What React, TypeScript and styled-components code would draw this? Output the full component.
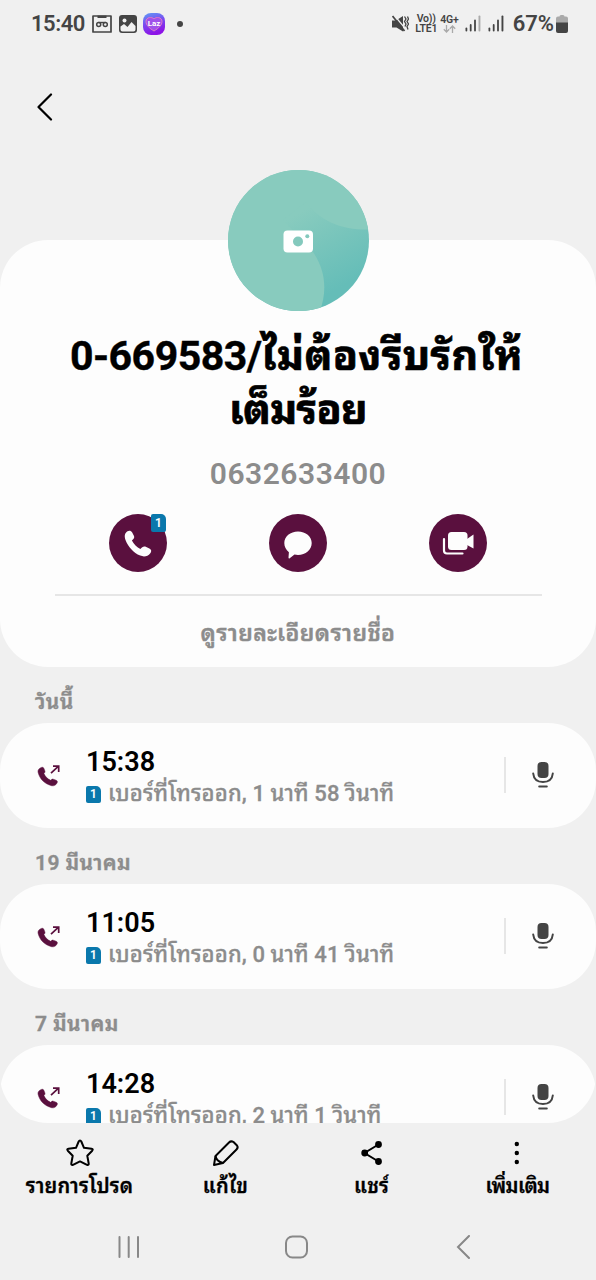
import styled, { createGlobalStyle } from 'styled-components';

const GlobalStyle = createGlobalStyle`
  * {
    box-sizing: border-box;
  }

  body {
    margin: 0;
    background: #f0f0f0;
    font-family: Roboto, 'Noto Sans Thai Looped', Loma, 'Noto Sans Thai', 'Noto Sans', sans-serif;
  }
`;

const calls = [
  { day: 'วันนี้', time: '15:38', duration: ', 1 นาที 58 วินาที' },
  { day: '19 มีนาคม', time: '11:05', duration: ', 0 นาที 41 วินาที' },
  { day: '7 มีนาคม', time: '14:28', duration: ', 2 นาที 1 วินาที' },
];

function SimBadge({ className }: { className?: string }) {
  return <Sim className={className}>1</Sim>;
}

function StatusIcons() {
  return (
    <StatusGroup>
      <svg width="20" height="18" viewBox="0 0 20 18" fill="none" stroke="#444" strokeWidth="1.7">
        <path d="M1 1h18v16H1z" strokeLinejoin="round" />
        <path d="M5.500 1.800h9" strokeWidth="2.400" />
        <circle cx="6.700" cy="9.500" r="2" strokeWidth="1.500" />
        <circle cx="13.300" cy="9.500" r="2" strokeWidth="1.500" />
        <path d="M6.500 7.500h7" strokeWidth="1.400" />
      </svg>
      <svg width="18" height="18" viewBox="0 0 18 18">
        <rect width="18" height="18" rx="3" fill="#444" />
        <circle cx="5.500" cy="5.500" r="2" fill="#f0f0f0" />
        <path d="M1.500 11.500l3.500-2.500 3.500 3 4-5 4 4v3.500q0 2-2 2h-11q-2 0-2-2z" fill="#f0f0f0" />
      </svg>
      <AppIcon viewBox="0 0 22 22">
        <defs>
          <linearGradient id="app" x1="0" y1="0" x2="0.3" y2="1">
            <stop offset="0" stopColor="#5f9df6" />
            <stop offset="0.5" stopColor="#7a4cf0" />
            <stop offset="1" stopColor="#8d12e6" />
          </linearGradient>
        </defs>
        <rect width="22" height="22" rx="8" fill="url(#app)" />
        <path d="M11 18C6 15 3 12 3 8.500C3 4 9 3.500 11 6c2-2.500 8-2 8 2.500C19 12 16 15 11 18z" fill="#a050ea" stroke="#e07ac8" strokeWidth="1" />
        <text x="11" y="13.200" fontSize="8" fontWeight="700" textAnchor="middle" fill="#fff">Laz</text>
      </AppIcon>
      <Dot />
    </StatusGroup>
  );
}

function Signal({ weak }: { weak?: boolean }) {
  return (
    <svg width="17" height="17" viewBox="0 0 17 17" fill="#444">
      <rect x="0.500" y="12.500" width="1.800" height="4" rx="0.900" />
      <rect x="4.800" y="9" width="1.800" height="7.500" rx="0.900" />
      <rect x="9.100" y="4.500" width="1.800" height="12" rx="0.900" />
      <rect x="13.500" y="0.500" width="1.900" height="16" rx="0.900" fill={weak ? '#aaa' : '#444'} />
    </svg>
  );
}

function OutgoingIcon() {
  return (
    <OutgoingSvg viewBox="0 0 24 24">
      <path
        d="M4.500 4.400C5.700 4 6.500 4.500 7 5.700L7.900 8C8.300 9.100 7.500 9.800 6.900 10.600C8.500 13.900 10.400 15.900 13.700 17.300C14.500 16.700 15.100 15.800 16.200 16.200L19 17.200C20.400 17.700 20.700 18.700 20 20C18.900 22.100 17 23.200 14.600 22.700C7.400 20.700 2.700 16.100 1 9C0.700 6.900 2.300 5 4.500 4.400z"
        fill="#5a103e"
        stroke="#5a103e"
        strokeWidth="0.500"
      />
      <path d="M14 10.200L21 3.600M16 3.200h5.700v5.700" fill="none" stroke="#5a103e" strokeWidth="1.700" />
    </OutgoingSvg>
  );
}

function MicIcon() {
  return (
    <svg width="22" height="28" viewBox="0 0 22 28" fill="none" stroke="#444" strokeWidth="2" strokeLinecap="round">
      <rect x="5.500" y="1" width="11" height="16" rx="4" fill="#444" stroke="none" />
      <path d="M1.200 12.500C1.800 18.500 5.500 21 11 21s9.200-2.500 9.800-8.500" />
      <path d="M7.200 25.600h7.600" />
    </svg>
  );
}

export default function App() {
  return (
    <Screen>
      <GlobalStyle />
      <StatusBar>
        <StatusGroup>
          <Clock>15:40</Clock>
          <StatusIcons />
        </StatusGroup>
        <StatusRight>
          <svg width="17" height="18" viewBox="0 0 17 18" fill="#444">
            <path d="M0 5.500h4L11 1v15.500L4.500 12.500H0z" />
            <path d="M2 0L14.500 15" stroke="#f0f0f0" strokeWidth="1.300" />
            <path d="M0.500 1L12.500 16" stroke="#444" strokeWidth="1.800" />
            <path d="M12.500 1.500l1.500 2.500-1.500 2.500 1.500 2.500-1 2.500M15.500 1.500l1 2.500-1.500 2.500 1.500 2.500-1.500 2.500 1 3" fill="none" stroke="#444" strokeWidth="1.300" />
          </svg>
          <Network>
            <span>Vo))</span>
            <span>LTE1</span>
          </Network>
          <Network>
            <span>4G+</span>
            <svg width="13" height="8" viewBox="0 0 13 8" fill="none" stroke="#aaa" strokeWidth="1.300">
              <path d="M3.500 0v7M0.800 4.300l2.700 2.700 2.700-2.700M9.500 8V1M6.800 3.700L9.500 1l2.700 2.700" />
            </svg>
          </Network>
          <Signal weak />
          <Signal />
          <Battery>67%</Battery>
          <svg width="12" height="18" viewBox="0 0 12 18">
            <path d="M3.500 1.500Q3.500 0 5 0h2q1.500 0 1.500 1.500H10q2 0 2 2V8H0V3.500q0-2 2-2z" fill="#aaa" />
            <path d="M0 7.500h12V16q0 2-2 2H2q-2 0-2-2z" fill="#444" />
          </svg>
        </StatusRight>
      </StatusBar>

      <Header>
        <svg width="18" height="28" viewBox="0 0 18 28" fill="none" stroke="#000" strokeWidth="2.200" strokeLinecap="round" strokeLinejoin="round">
          <path d="M15 1.500L2.500 14 15 26.500" />
        </svg>
      </Header>

      <Profile>
        <Avatar viewBox="0 0 141 141">
          <defs>
            <clipPath id="face">
              <circle cx="70.500" cy="70.500" r="70.500" />
            </clipPath>
            <linearGradient id="wave" gradientUnits="userSpaceOnUse" x1="80" y1="38" x2="122" y2="112">
              <stop offset="0" stopColor="#88cbbe" />
              <stop offset="1" stopColor="#65bdb8" />
            </linearGradient>
          </defs>
          <g clipPath="url(#face)">
            <rect width="141" height="141" fill="url(#wave)" />
            <path d="M78 32C93 52 114 60 141 59.500V0H0V141H92C99 121 98 101 85 82L55 50z" fill="#88cbbe" />
          </g>
          <rect x="55.500" y="60.500" width="29.500" height="22" rx="4" fill="#fff" />
          <circle cx="70" cy="71.500" r="5" fill="#84c9bd" />
          <circle cx="79.300" cy="66.300" r="2" fill="#84c9bd" />
        </Avatar>
        <Name>
          0-669583/<FirstLine>ไม่ต้องรีบรักให้</FirstLine>
          <br />
          <SecondLine>เต็มร้อย</SecondLine>
        </Name>
        <Phone>0632633400</Phone>
        <Actions>
          <Action>
            <svg width="58" height="58" viewBox="0 0 58 58" fill="#fdfdfd">
              <path d="M18.500 17.300C20.200 16.200 22.200 16.700 23.200 18.500L25 21.900C25.900 23.700 24.300 25 22.900 26.500C24.600 30 28 33.300 31.400 34.900C33 33.500 34.400 31.900 36.200 32.600L40.400 34.400C42.600 35.300 42.700 37.400 41.300 39.200C38.800 42.400 35 43.200 31.200 41.600C24.400 38.500 19.200 33 16.600 26.200C15.100 22.200 15.600 19.200 18.500 17.300z" />
            </svg>
            <ActionBadge />
          </Action>
          <Action>
            <svg width="58" height="58" viewBox="0 0 58 58" fill="#fdfdfd">
              <path d="M29 17.500c7.700 0 13.700 5 13.700 11.600S36.700 41 29 41c-1.200 0-2.400-.1-3.500-.4L20.700 44.300c-.6.400-1.300.1-1.200-.7l.4-5.400c-2.900-2.200-4.600-5.400-4.600-9.100 0-6.600 6-11.600 13.700-11.600z" />
            </svg>
          </Action>
          <Action>
            <svg width="58" height="58" viewBox="0 0 58 58" fill="#fdfdfd">
              <rect x="19" y="18" width="19.500" height="18" rx="3.500" />
              <path d="M38 25l6.500-4.500v14L38 31z" strokeLinejoin="round" />
              <path d="M15 25v11.500q0 3 3 3h15.500" fill="none" stroke="#fdfdfd" strokeWidth="2.200" strokeLinecap="round" />
            </svg>
          </Action>
        </Actions>
        <Details>ดูรายละเอียดรายชื่อ</Details>
      </Profile>

      <CallList>
        {calls.map((call) => (
          <div key={call.day}>
            <Day>{call.day}</Day>
            <CallCard>
              <OutgoingIcon />
              <CallText>
                <Time>{call.time}</Time>
                <Duration>
                  <SimBadge />
                  <span>เบอร์ที่โทรออก{call.duration}</span>
                </Duration>
              </CallText>
              <Recording>
                <MicIcon />
              </Recording>
            </CallCard>
          </div>
        ))}
      </CallList>

      <Toolbar>
        <Tool>
          <svg width="30" height="30" viewBox="0 0 30 30" fill="none" stroke="#000" strokeWidth="2" strokeLinejoin="round">
            <path d="M15 2.500Q15.800 2.500 16.300 3.500L19 9.800L26.500 10.700Q28.600 11.100 27.200 12.700L22.300 17.700L23.700 25.500Q23.900 27.500 22 26.900L15 23.400L8 26.900Q6.100 27.500 6.300 25.500L7.700 17.700L2.800 12.700Q1.400 11.100 3.500 10.700L11 9.800L13.700 3.500Q14.200 2.500 15 2.500z" />
          </svg>
          <span>รายการโปรด</span>
        </Tool>
        <Tool>
          <svg width="30" height="30" viewBox="0 0 30 30" fill="none" stroke="#000" strokeWidth="2" strokeLinejoin="round">
            <path d="M3 27l1.500-9L18 4.500q2-2 4.500-.5l3.500 3.500q1.500 2-.5 4L12 25z" />
            <path d="M4.500 18q1 5.500 7.500 7" />
          </svg>
          <span>แก้ไข</span>
        </Tool>
        <Tool>
          <svg width="30" height="30" viewBox="0 0 30 30" fill="#000" stroke="#000" strokeWidth="2">
            <path d="M21.500 6.500L7.500 15l14 8.500" fill="none" />
            <circle cx="21.500" cy="6.500" r="2.400" />
            <circle cx="7.700" cy="15" r="2.400" />
            <circle cx="21.500" cy="23.500" r="2.400" />
          </svg>
          <span>แชร์</span>
        </Tool>
        <Tool>
          <svg width="30" height="30" viewBox="0 0 30 30">
            <circle cx="13.800" cy="6" r="2.200" />
            <circle cx="13.800" cy="15" r="2.200" />
            <circle cx="13.800" cy="24" r="2.200" />
          </svg>
          <NarrowLabel>เพิ่มเติม</NarrowLabel>
        </Tool>
      </Toolbar>

      <NavBar>
        <svg width="24" height="24" viewBox="0 0 24 24">
          <path d="M2.500 2v20M11.700 2v20M21 2v20" />
        </svg>
        <svg width="24" height="24" viewBox="0 0 24 24">
          <rect x="1" y="1.500" width="21" height="21" rx="6.500" />
        </svg>
        <svg width="24" height="24" viewBox="0 0 24 24">
          <path d="M17 1L6 12l11 11" />
        </svg>
      </NavBar>
    </Screen>
  );
}

const Screen = styled.main`
  display: flex;
  flex-direction: column;
  width: 596px;
  height: 1280px;
  overflow: hidden;
  background: #f0f0f0;
`;

const StatusBar = styled.div`
  display: flex;
  justify-content: space-between;
  align-items: center;
  height: 47px;
  padding: 0 28px 0 31px;
  color: #444;
`;

const StatusGroup = styled.div`
  display: flex;
  align-items: center;
  gap: 7px;
`;

const StatusRight = styled(StatusGroup)`
  gap: 6px;
`;

const Clock = styled.span`
  font-size: 22px;
  font-weight: 600;
  letter-spacing: -0.5px;
`;

const AppIcon = styled.svg`
  width: 22px;
  height: 22px;
  margin-left: -1px;
`;

const Dot = styled.i`
  width: 6px;
  height: 6px;
  margin-left: 5px;
  border-radius: 50%;
  background: #444;
`;

const Network = styled.span`
  display: flex;
  flex-direction: column;
  align-items: center;
  font-size: 10.5px;
  font-weight: 600;
  letter-spacing: -0.2px;
  line-height: 10px;

  & + & {
    margin-left: -3px;
  }
`;

const Battery = styled.span`
  margin-right: -4px;
  margin-left: 2px;
  font-size: 22px;
  font-weight: 600;
`;

const Header = styled.header`
  display: flex;
  align-items: center;
  height: 120px;
  padding-left: 36px;
`;

const Profile = styled.section`
  display: flex;
  flex-direction: column;
  align-items: center;
  height: 427px;
  margin-top: 73px;
  border-radius: 48px;
  background: #fdfdfd;
`;

const Avatar = styled.svg`
  flex: none;
  width: 141px;
  height: 141px;
  margin-top: -70px;
`;

const Name = styled.h1`
  height: 110px;
  margin: 18px 0 0;
  color: #000;
  font-size: 41px;
  font-weight: 700;
  letter-spacing: -0.5px;
  line-height: 54px;
  text-align: center;
  white-space: nowrap;
  -webkit-text-stroke: 0.4px #000;
`;

const FirstLine = styled.span`
  margin-right: 3px;
  letter-spacing: 0.5px;
  -webkit-text-stroke: 0.7px #000;
`;

const SecondLine = styled.span`
  letter-spacing: -0.6px;
  -webkit-text-stroke: 0.7px #000;
`;

const Phone = styled.div`
  height: 40px;
  margin-top: 15px;
  color: #8c8c8c;
  font-size: 30px;
  font-weight: 600;
  letter-spacing: 0.5px;
  line-height: 40px;
`;

const Actions = styled.div`
  display: flex;
  justify-content: center;
  gap: 102px;
  width: 487px;
  margin-top: 20px;
  padding-bottom: 22px;
  border-bottom: 2px solid #e6e6e6;
`;

const Action = styled.div`
  position: relative;
  width: 58px;
  height: 58px;
  border-radius: 50%;
  background: #5a103e;
`;

const Sim = styled.span`
  display: flex;
  justify-content: center;
  align-items: center;
  flex: none;
  width: 15px;
  height: 17px;
  border-radius: 2px 5px 2px 2px;
  background: #0a78ac;
  color: #fff;
  font-size: 12px;
  font-weight: 600;
`;

const ActionBadge = styled(SimBadge)`
  position: absolute;
  top: 0;
  right: 1px;
  height: 18px;
`;

const Details = styled.div`
  margin-top: 21px;
  color: #8c8c8c;
  font-size: 23px;
  font-weight: 600;
  letter-spacing: 0.4px;
  line-height: 34px;
  -webkit-text-stroke: 0.4px #8c8c8c;
`;

const CallList = styled.section`
  height: 456px;
  overflow: hidden;
  border-radius: 0 0 48px 48px;
`;

const Day = styled.div`
  height: 55.5px;
  padding: 18px 0 0 35px;
  color: #8c8c8c;
  font-size: 21px;
  font-weight: 600;
  letter-spacing: 0.4px;
  line-height: 34px;
  -webkit-text-stroke: 0.4px #8c8c8c;
`;

const CallCard = styled.article`
  display: flex;
  align-items: center;
  height: 105.5px;
  padding: 0 42px 0 37px;
  border-radius: 48px;
  background: #fdfdfd;
`;

const OutgoingSvg = styled.svg`
  width: 24px;
  height: 24px;
`;

const CallText = styled.div`
  flex: 1;
  margin-left: 25px;
  padding-top: 6px;
`;

const Time = styled.div`
  color: #000;
  font-size: 27px;
  font-weight: 600;
  line-height: 32px;
`;

const Duration = styled.div`
  display: flex;
  align-items: center;
  gap: 7px;
  height: 32px;
  color: #8c8c8c;
  font-size: 22px;
  font-weight: 500;
  letter-spacing: 0.1px;
  line-height: 32px;
  white-space: nowrap;
  -webkit-text-stroke: 0.3px #8c8c8c;

  ${Sim} {
    -webkit-text-stroke: 0;
  }
`;

const Recording = styled.div`
  display: flex;
  align-items: center;
  height: 36px;
  padding-left: 26px;
  border-left: 2px solid #e6e6e6;
`;

const Toolbar = styled.nav`
  display: grid;
  grid-template-columns: repeat(4, 146px);
  justify-content: center;
  height: 90px;
  padding: 15px 0 0 1px;
`;

const Tool = styled.div`
  display: flex;
  flex-direction: column;
  align-items: center;
  color: #000;
  font-size: 20px;
  font-weight: 600;
  letter-spacing: 0.2px;
  line-height: 36px;
  -webkit-text-stroke: 0.3px #000;
`;

const NarrowLabel = styled.span`
  letter-spacing: -0.6px;
`;

const NavBar = styled.footer`
  display: flex;
  justify-content: space-between;
  align-items: center;
  height: 67px;
  padding: 0 120px 0 117px;
  fill: none;
  stroke: #888;
  stroke-width: 2;
  stroke-linecap: round;
`;
